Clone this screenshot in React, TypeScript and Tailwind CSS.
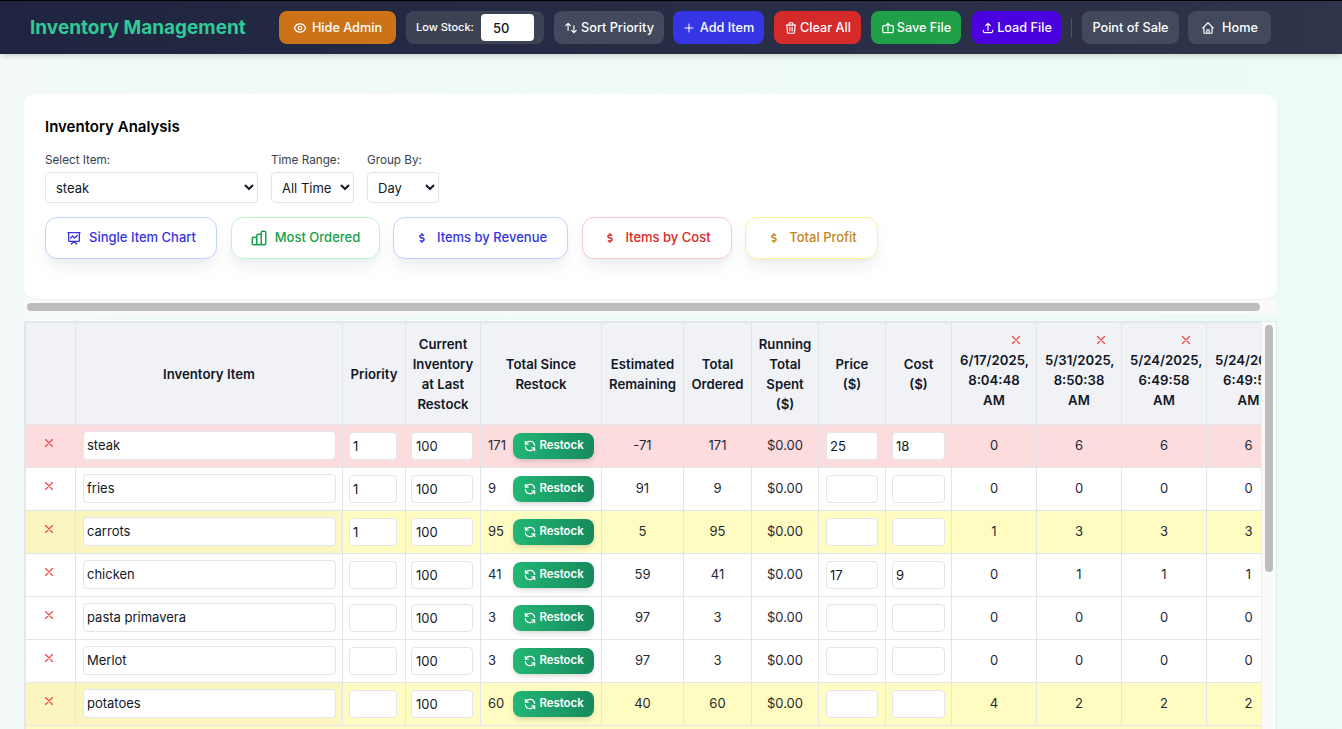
import {
  HiOutlineChartBar,
  HiOutlineEye,
  HiOutlineHome,
  HiOutlinePlus,
  HiOutlinePresentationChartLine,
  HiOutlineRefresh,
  HiOutlineSwitchVertical,
  HiOutlineTrash,
  HiOutlineUpload,
  HiOutlineX,
} from "react-icons/hi";
import { FaDollarSign } from "react-icons/fa";

const font = { fontFamily: "Inter, 'Noto Sans', sans-serif" };

const rows = [
  { name: "steak", priority: "1", total: 171, left: -71, price: "25", cost: "18", d: [0, 6, 6, 6], tone: "red" },
  { name: "fries", priority: "1", total: 9, left: 91, price: "", cost: "", d: [0, 0, 0, 0], tone: "" },
  { name: "carrots", priority: "1", total: 95, left: 5, price: "", cost: "", d: [1, 3, 3, 3], tone: "yellow" },
  { name: "chicken", priority: "", total: 41, left: 59, price: "17", cost: "9", d: [0, 1, 1, 1], tone: "" },
  { name: "pasta primavera", priority: "", total: 3, left: 97, price: "", cost: "", d: [0, 0, 0, 0], tone: "" },
  { name: "Merlot", priority: "", total: 3, left: 97, price: "", cost: "", d: [0, 0, 0, 0], tone: "" },
  { name: "potatoes", priority: "", total: 60, left: 40, price: "", cost: "", d: [4, 2, 2, 2], tone: "yellow" },
];

const dates = [
  "6/17/2025, 8:04:48 AM",
  "5/31/2025, 8:50:38 AM",
  "5/24/2025, 6:49:58 AM",
  "5/24/2025, 6:49:58 AM",
];

const colWidths = [50, 267, 63, 75, 121, 82, 68, 67, 67, 66, 85, 85, 85, 84];

const SaveIcon = () => (
  <svg viewBox="0 0 24 24" fill="none" stroke="currentColor" strokeWidth="2" strokeLinecap="round" strokeLinejoin="round" className="w-[14px] h-[14px] mr-[2px]">
    <path d="M8 8H5a2 2 0 00-2 2v8a2 2 0 002 2h14a2 2 0 002-2v-8a2 2 0 00-2-2h-3" />
    <path d="M12 17V4m0 0L8.5 7.5M12 4l3.5 3.5" />
  </svg>
);

const TopButton = ({ icon, label, className }: { icon?: React.ReactNode; label: string; className: string }) => (
  <button className={`flex items-center justify-center h-[33px] rounded-lg text-white text-[12.7px] font-medium ${className}`}>
    {icon}
    {label}
  </button>
);

const ChartButton = ({ icon, label, className }: { icon: React.ReactNode; label: string; className: string }) => (
  <button className={`flex items-center justify-center gap-[7px] h-[42px] rounded-xl border bg-white text-[13px] font-medium shadow-lg shadow-gray-200/70 ${className}`}>
    {icon}
    {label}
  </button>
);

const Dollar = () => (
  <span className="w-4 flex justify-center">
    <FaDollarSign className="w-[10px] h-[10px]" />
  </span>
);

const Cell = ({ children, className = "" }: { children?: React.ReactNode; className?: string }) => (
  <td className={`border border-[#e2e5ec] px-[7px] text-center text-[13px] text-[#1f2937] ${className}`}>{children}</td>
);

const Field = ({ value, className = "" }: { value: string; className?: string }) => (
  <input
    defaultValue={value}
    className={`block px-[3px] bg-white border border-[#e2e5ec] rounded text-[13px] text-[#111827] ${className}`}
  />
);

const App = () => {
  return (
    <div style={font} className="h-[729px] overflow-hidden bg-gradient-to-r from-[#f3faf9] to-[#ecfbf5]">
      <header className="flex items-center h-[54px] border-t border-black bg-gradient-to-r from-[#1f2540] to-[#2e3449] shadow-md">
        <h1 className="w-[279px] pl-[30px] text-[19px] leading-[30px] pt-[1px] font-bold text-[#2fca95]">Inventory Management</h1>
        <TopButton
          label="Hide Admin"
          icon={<HiOutlineEye className="w-[14px] h-[14px] mr-[5px]" />}
          className="w-[117px] bg-[#cc7317]"
        />
        <div className="flex items-center ml-[10px] w-[138px] h-[33px] pl-[10px] rounded-lg bg-[#3d4355] text-white text-[11px] font-medium">
          Low Stock:
          <input defaultValue="50" className="ml-[7px] w-[53px] h-[27px] px-3 rounded bg-white text-[13px] text-[#111827]" />
        </div>
        <TopButton
          label="Sort Priority"
          icon={<HiOutlineSwitchVertical className="w-[14px] h-[14px] mr-[3px]" />}
          className="ml-[10px] w-[110px] bg-[#434a5d]"
        />
        <TopButton
          label="Add Item"
          icon={<HiOutlinePlus className="w-3 h-3 mr-[5px]" />}
          className="ml-[9px] w-[91px] bg-[#3535e6]"
        />
        <TopButton
          label="Clear All"
          icon={<HiOutlineTrash className="w-[14px] h-[14px] mr-[2px]" />}
          className="ml-[10px] w-[87px] bg-[#d42a2a]"
        />
        <TopButton
          label="Save File"
          icon={<SaveIcon />}
          className="ml-[10px] w-[90px] bg-[#1fa049]"
        />
        <TopButton
          label="Load File"
          icon={<HiOutlineUpload className="w-[14px] h-[14px] mr-[2px]" />}
          className="ml-[11px] w-[89px] bg-[#4b00e0]"
        />
        <div className="ml-[10px] w-px h-5 bg-[#4a5062]" />
        <TopButton label="Point of Sale" className="ml-[10px] w-[97px] bg-[#434a5d]" />
        <TopButton
          label="Home"
          icon={<HiOutlineHome className="w-[14px] h-[14px] mr-[7px]" />}
          className="ml-[9px] w-[83px] bg-[#434a5d]"
        />
      </header>

      <main className="w-[1253px] ml-6 mt-10">
        <section className="h-[206px] pt-[22px] px-[21px] bg-white rounded-xl border-b border-[#eceef0]">
          <h2 className="text-[15px] font-semibold leading-[22px] text-black">Inventory Analysis</h2>
          <div className="flex gap-[13px] mt-[14px] text-[#374151]">
            <label className="flex flex-col text-[11.7px] leading-[16px] gap-[4px]">
              Select Item:
              <select className="w-[213px] h-[31px] pl-[6px] bg-white border border-[#e2e5ec] rounded text-[13px] text-[#111827]">
                <option>steak</option>
              </select>
            </label>
            <label className="flex flex-col text-[11.7px] leading-[16px] gap-[4px]">
              Time Range:
              <select className="w-[83px] h-[31px] pl-[6px] bg-white border border-[#e2e5ec] rounded text-[13px] text-[#111827]">
                <option>All Time</option>
              </select>
            </label>
            <label className="flex flex-col text-[11.7px] leading-[16px] gap-[4px]">
              Group By:
              <select className="w-[72px] h-[31px] pl-[6px] bg-white border border-[#e2e5ec] rounded text-[13px] text-[#111827]">
                <option>Day</option>
              </select>
            </label>
          </div>
          <div className="flex gap-[13.5px] mt-[14px]">
            <ChartButton
              label="Single Item Chart"
              icon={<HiOutlinePresentationChartLine className="w-4 h-4" />}
              className="w-[172px] border-[#bfd3fc] text-[#3535e0]"
            />
            <ChartButton
              label="Most Ordered"
              icon={<HiOutlineChartBar className="w-[18px] h-[18px]" />}
              className="w-[149px] border-[#bdf5cf] text-[#16a34a]"
            />
            <ChartButton
              label="Items by Revenue"
              icon={<Dollar />}
              className="w-[175px] border-[#bfd3fc] text-[#3535e0]"
            />
            <ChartButton
              label="Items by Cost"
              icon={<Dollar />}
              className="w-[150px] border-[#fbc9c9] text-[#dc2626]"
            />
            <ChartButton
              label="Total Profit"
              icon={<Dollar />}
              className="w-[133px] border-[#fdf28c] text-[#c2861a]"
            />
          </div>
        </section>

        <div className="flex items-center h-[14px] px-[3px] bg-[#fafafa]">
          <div className="w-[1233px] h-2 rounded bg-[#bdbdbd]" />
        </div>

        <div className="relative mt-[7px] h-[500px] overflow-hidden bg-white border border-[#e4e7ec]">
          <table className="table-fixed border-collapse w-[1265px]">
            <colgroup>
              {colWidths.map((w, i) => (
                <col key={i} style={{ width: w }} />
              ))}
            </colgroup>
            <thead>
              <tr className="h-[102px] bg-[#f0f2f6] text-[13.2px] leading-5 font-semibold text-[#111827]">
                <th className="border border-[#e2e5ec]" />
                <th className="border border-[#e2e5ec] font-semibold">Inventory Item</th>
                <th className="border border-[#e2e5ec] font-semibold">Priority</th>
                <th className="border border-[#e2e5ec] px-1 font-semibold">Current Inventory at Last Restock</th>
                <th className="border border-[#e2e5ec] px-4 font-semibold">Total Since Restock</th>
                <th className="border border-[#e2e5ec] font-semibold">Estimated Remaining</th>
                <th className="border border-[#e2e5ec] font-semibold">Total Ordered</th>
                <th className="border border-[#e2e5ec] px-1 font-semibold">Running Total Spent ($)</th>
                <th className="border border-[#e2e5ec] px-3 font-semibold">Price ($)</th>
                <th className="border border-[#e2e5ec] px-3 font-semibold">Cost ($)</th>
                {dates.map((d, i) => (
                  <th key={i} className="border border-[#e2e5ec] px-2 font-semibold align-top pt-[7px]">
                    <div className="flex justify-end pr-[5px] h-5 items-center">
                      <HiOutlineX className="w-[14px] h-[14px] text-[#ef4444]" />
                    </div>
                    {d}
                  </th>
                ))}
              </tr>
            </thead>
            <tbody>
              {rows.map((r, i) => {
                const bg = r.tone === "red" ? "bg-[#fddcde]" : r.tone === "yellow" ? "bg-[#fefcc0]" : "bg-white";
                const stick = r.tone === "yellow" ? "bg-[#fbf6c0]" : "";
                return (
                  <tr key={i} className={`h-[43px] ${bg}`}>
                    <Cell className={stick}>
                      <HiOutlineX className="w-[14px] h-[14px] mx-auto mb-[6px] -translate-x-[2px] text-[#ef4444]" />
                    </Cell>
                    <Cell className={stick}>
                      <Field value={r.name} className="w-[253px] h-[29px] mb-[2px]" />
                    </Cell>
                    <Cell>
                      <Field value={r.priority} className="w-[48px] h-[28px] -ml-px mb-[1px]" />
                    </Cell>
                    <Cell>
                      <Field value="100" className="w-[62px] h-[28px] -ml-[2px] pl-1 mb-[1px]" />
                    </Cell>
                    <Cell>
                      <div className="flex items-center justify-between">
                        {r.total}
                        <button className="flex items-center justify-center gap-[2px] w-[81px] h-[26px] rounded-lg bg-gradient-to-r from-[#22b775] to-[#178a5d] text-white text-[11.4px] font-semibold shadow-md">
                          <HiOutlineRefresh className="w-[14px] h-[14px]" />
                          Restock
                        </button>
                      </div>
                    </Cell>
                    <Cell>{r.left}</Cell>
                    <Cell>{r.total}</Cell>
                    <Cell>$0.00</Cell>
                    <Cell>
                      <Field value={r.price} className="w-[52px] h-[28px] mb-[1px]" />
                    </Cell>
                    <Cell>
                      <Field value={r.cost} className="w-[53px] h-[28px] -ml-px mb-[1px]" />
                    </Cell>
                    {r.d.map((n, j) => (
                      <Cell key={j}>{n}</Cell>
                    ))}
                  </tr>
                );
              })}
              <tr className="h-[43px] bg-[#fefcc0]">
                <td colSpan={14} className="border border-[#e2e5ec]" />
              </tr>
            </tbody>
          </table>
          <div className="absolute top-0 right-0 bottom-0 w-[15px] px-[3px] pt-[3px] bg-[#fafafa] border-l border-[#eceef0]">
            <div className="h-[247px] rounded bg-[#bdbdbd]" />
          </div>
        </div>
      </main>
    </div>
  );
};

export default App;
